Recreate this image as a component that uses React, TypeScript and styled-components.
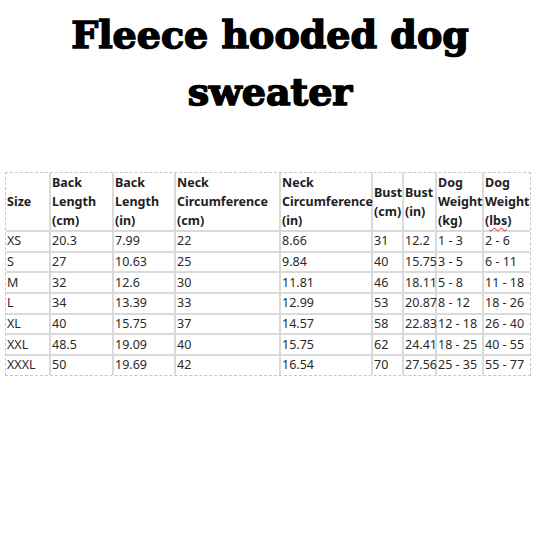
import styled, { createGlobalStyle } from 'styled-components';

const GlobalStyle = createGlobalStyle`
  html, body {
    margin: 0;
    padding: 0;
    background: #ffffff;
  }
`;

const rows = [
  ['XS', '20.3', '7.99', '22', '8.66', '31', '12.2', '1 - 3', '2 - 6'],
  ['S', '27', '10.63', '25', '9.84', '40', '15.75', '3 - 5', '6 - 11'],
  ['M', '32', '12.6', '30', '11.81', '46', '18.11', '5 - 8', '11 - 18'],
  ['L', '34', '13.39', '33', '12.99', '53', '20.87', '8 - 12', '18 - 26'],
  ['XL', '40', '15.75', '37', '14.57', '58', '22.83', '12 - 18', '26 - 40'],
  ['XXL', '48.5', '19.09', '40', '15.75', '62', '24.41', '18 - 25', '40 - 55'],
  ['XXXL', '50', '19.69', '42', '16.54', '70', '27.56', '25 - 35', '55 - 77'],
];

const widths = [44, 63, 62, 105, 92, 31, 33, 47, 47];

const App = () => (
  <Page>
    <GlobalStyle />
    <Title>
      Fleece hooded dog
      <br />
      sweater
    </Title>
    <TableWrap>
      <SizeTable>
        <colgroup>
          {widths.map((w, i) => (
            <col key={i} style={{ width: w }} />
          ))}
        </colgroup>
        <thead>
          <tr>
            <HeadCell>Size</HeadCell>
            <HeadCell>Back<br />Length<br />(cm)</HeadCell>
            <HeadCell>Back<br />Length<br />(in)</HeadCell>
            <HeadCell>Neck<br />Circumference<br />(cm)</HeadCell>
            <HeadCell>Neck<br />Circumference<br />(in)</HeadCell>
            <HeadCell>Bust<br />(cm)</HeadCell>
            <HeadCell>Bust<br />(in)</HeadCell>
            <HeadCell>Dog<br />Weight<br />(kg)</HeadCell>
            <HeadCell>Dog<br />Weight<br />(<Squiggle>lbs</Squiggle>)</HeadCell>
          </tr>
        </thead>
        <tbody>
          {rows.map(r => (
            <tr key={r[0]}>
              {r.map((c, i) => (
                <Cell key={i}>{c}</Cell>
              ))}
            </tr>
          ))}
        </tbody>
      </SizeTable>
    </TableWrap>
  </Page>
);

const Page = styled.div`
  width: 540px;
  height: 540px;
  background: #fff;
  overflow: hidden;
`;

const Title = styled.h1`
  margin: 0;
  padding-top: 6px;
  text-align: center;
  font-family: 'DejaVu Serif', serif;
  font-weight: 900;
  font-size: 38px;
  line-height: 57px;
  color: #000;
  -webkit-text-stroke: 1.5px #000;
`;

const TableWrap = styled.div`
  margin: 52px 0 0 5px;
  width: 524px;
  border: 1px dashed #c8c8c8;
`;

const SizeTable = styled.table`
  border-collapse: collapse;
  table-layout: fixed;
  width: 524px;
  font-family: 'Noto Sans', sans-serif;
  font-size: 12.5px;
  color: #2a2a2a;
`;

const HeadCell = styled.th`
  border: 2px solid #dadada;
  border-top: none;
  text-align: left;
  font-weight: 700;
  color: #1e1e1e;
  line-height: 19px;
  height: 56px;
  padding: 0 0 0 1px;
  vertical-align: middle;
  white-space: nowrap;
  overflow: visible;
  &:first-child { border-left: none; }
  &:last-child { border-right: none; }
`;

const Cell = styled.td`
  border: 2px solid #dadada;
  padding: 0 0 0 1px;
  height: 18.7px;
  line-height: 18px;
  white-space: nowrap;
  overflow: visible;
  tr:last-child & { border-bottom: none; }
  &:first-child { border-left: none; }
  &:last-child { border-right: none; }
`;

const Squiggle = styled.span`
  text-decoration: underline wavy #e02020;
  text-decoration-thickness: 1px;
  text-underline-offset: 2px;
`;

export default App;
